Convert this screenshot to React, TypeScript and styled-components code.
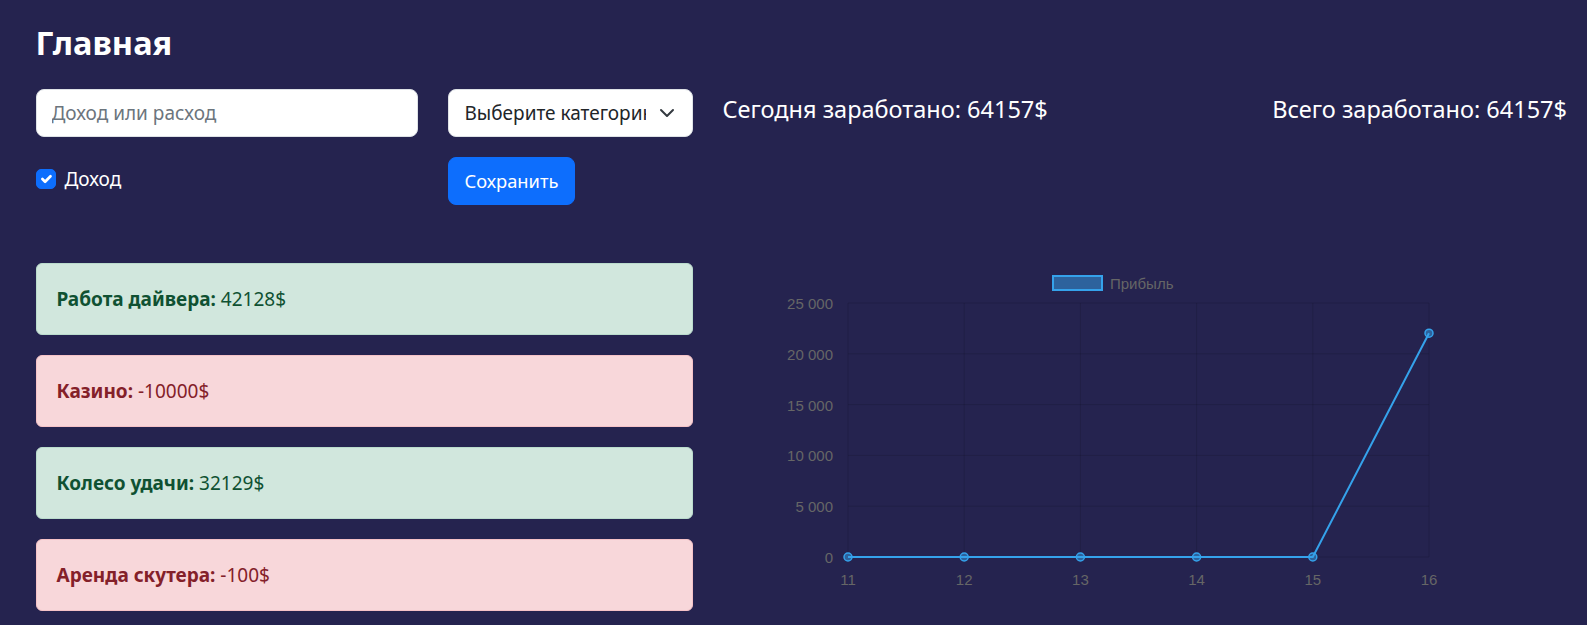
import React from 'react';
import styled, { createGlobalStyle } from 'styled-components';

const GlobalStyle = createGlobalStyle`
  html, body { margin: 0; padding: 0; background: #25234f; }
  body { font-family: "Noto Sans", "Open Sans", sans-serif; }
  *, *::before, *::after { box-sizing: border-box; }
`;

const Page = styled.div`
  min-height: 625px;
  padding: 23px 20px 0 35.5px;
  color: #fff;
`;

const Title = styled.h1`
  margin: 0;
  font-size: 32.5px;
  font-weight: 700;
  line-height: 40px;
`;

const TopRow = styled.div`
  display: flex;
  gap: 30px;
  margin-top: 26px;
`;

const FormGrid = styled.div`
  display: grid;
  grid-template-columns: 382px 245px;
  column-gap: 30px;
  row-gap: 20px;
  width: 657px;
  flex: none;
`;

const TextInput = styled.input`
  display: block;
  width: 100%;
  height: 48px;
  padding: 8px 15px;
  font-family: inherit;
  font-size: 19px;
  line-height: 1.5;
  color: #212529;
  background: #fff;
  border: 1px solid #dee2e6;
  border-radius: 8px;
  outline: none;
  &::placeholder { color: #6c757d; }
`;

const SelectWrap = styled.div`
  position: relative;
`;

const Select = styled.select`
  display: block;
  width: 100%;
  height: 48px;
  padding: 8px 46px 8px 16px;
  font-family: inherit;
  font-size: 19px;
  line-height: 1.5;
  color: #212529;
  background: #fff;
  border: 1px solid #dee2e6;
  border-radius: 8px;
  appearance: none;
  outline: none;
`;

const Chevron = styled.svg`
  position: absolute;
  right: 18px;
  top: 50%;
  width: 16px;
  height: 16px;
  margin-top: -8px;
  pointer-events: none;
`;

const CheckLabel = styled.label`
  display: flex;
  align-items: center;
  gap: 9px;
  margin-top: 7px;
  align-self: start;
  font-size: 19px;
  line-height: 30px;
  color: #fff;
`;

const CheckBox = styled.span`
  display: inline-flex;
  align-items: center;
  justify-content: center;
  width: 20px;
  height: 20px;
  border-radius: 5px;
  background: #0d6efd;
  border: 1px solid #0d6efd;
`;

const SaveButton = styled.button`
  justify-self: start;
  height: 48px;
  padding: 8px 16px;
  font-family: inherit;
  font-size: 18.3px;
  line-height: 1.5;
  color: #fff;
  background: #0d6efd;
  border: 1px solid #0d6efd;
  border-radius: 8px;
`;

const Stats = styled.div`
  flex: 1;
  display: flex;
  justify-content: space-between;
  align-items: flex-start;
  margin-top: 6px;
`;

const Stat = styled.div`
  font-size: 23.5px;
  line-height: 1.2;
  color: #fff;
`;

const MainRow = styled.div`
  display: flex;
  gap: 31px;
  margin-top: 58px;
  align-items: flex-start;
`;

const List = styled.div`
  width: 657px;
  flex: none;
  display: flex;
  flex-direction: column;
  gap: 20px;
`;

const Alert = styled.div<{ $kind: 'success' | 'danger' }>`
  padding: 20px;
  font-size: 19px;
  line-height: 30px;
  border-radius: 6px;
  border: 1px solid ${(p) => (p.$kind === 'success' ? '#badbcc' : '#f5c2c7')};
  background: ${(p) => (p.$kind === 'success' ? '#d1e7dd' : '#f8d7da')};
  color: ${(p) => (p.$kind === 'success' ? '#0f5132' : '#842029')};
  strong { font-weight: 700; }
`;

const ChartBox = styled.div`
  flex: 1;
`;

const ChartSvg = styled.svg`
  display: block;
  font-family: "Liberation Sans", Arial, sans-serif;
`;

const items: { name: string; value: number }[] = [
  { name: 'Работа дайвера', value: 42128 },
  { name: 'Казино', value: -10000 },
  { name: 'Колесо удачи', value: 32129 },
  { name: 'Аренда скутера', value: -100 },
];

const labels = ['11', '12', '13', '14', '15', '16'];
const data = [0, 0, 0, 0, 0, 22028];
const CL = 124;
const CR = 705;
const CT = 40;
const CB = 294;
const MAX = 25000;
const yOf = (v: number) => CB - (v / MAX) * (CB - CT);
const xOf = (i: number) => CL + (i * (CR - CL)) / (labels.length - 1);
const yTicks = [0, 5000, 10000, 15000, 20000, 25000];
const fmt = (v: number) => (v === 0 ? '0' : `${Math.floor(v / 1000)} 000`);

const Chart: React.FC = () => {
  const grid = 'rgba(0,0,0,0.12)';
  const blue = 'rgb(53,162,235)';
  const blueFill = 'rgba(53,162,235,0.5)';
  const points = data.map((v, i) => `${xOf(i)},${yOf(v)}`).join(' ');
  return (
    <ChartSvg width={845} height={350} viewBox="0 0 845 350">
      <rect x={329} y={13} width={49} height={14} fill={blueFill} stroke={blue} strokeWidth={2} />
      <text x={386} y={25.5} fontSize={15} fill="#666">Прибыль</text>
      {yTicks.map((t) => (
        <g key={t}>
          <line x1={CL} x2={CR} y1={yOf(t)} y2={yOf(t)} stroke={grid} strokeWidth={1} />
          <text x={109} y={yOf(t) + 6} fontSize={15} fill="#666" textAnchor="end">{fmt(t)}</text>
        </g>
      ))}
      {labels.map((l, i) => (
        <g key={l}>
          <line x1={xOf(i)} x2={xOf(i)} y1={CT} y2={CB} stroke={grid} strokeWidth={1} />
          <text x={xOf(i)} y={322} fontSize={15} fill="#666" textAnchor="middle">{l}</text>
        </g>
      ))}
      <polyline points={points} fill="none" stroke={blue} strokeWidth={2} />
      {data.map((v, i) => (
        <circle key={i} cx={xOf(i)} cy={yOf(v)} r={4} fill={blueFill} stroke={blue} strokeWidth={1.5} />
      ))}
    </ChartSvg>
  );
};

export default function App() {
  return (
    <>
      <GlobalStyle />
      <Page>
        <Title>Главная</Title>
        <TopRow>
          <FormGrid>
            <TextInput placeholder="Доход или расход" />
            <SelectWrap>
              <Select defaultValue="">
                <option value="">Выберите категорию</option>
              </Select>
              <Chevron viewBox="0 0 16 16">
                <path d="m2 5 6 6 6-6" fill="none" stroke="#343a40" strokeWidth={2} strokeLinecap="round" strokeLinejoin="round" />
              </Chevron>
            </SelectWrap>
            <CheckLabel>
              <CheckBox>
                <svg width="20" height="20" viewBox="0 0 20 20">
                  <path d="m6 10 3 3 6-6" fill="none" stroke="#fff" strokeWidth={3} strokeLinecap="round" strokeLinejoin="round" />
                </svg>
              </CheckBox>
              Доход
            </CheckLabel>
            <SaveButton>Сохранить</SaveButton>
          </FormGrid>
          <Stats>
            <Stat>Сегодня заработано: 64157$</Stat>
            <Stat>Всего заработано: 64157$</Stat>
          </Stats>
        </TopRow>
        <MainRow>
          <List>
            {items.map((it) => (
              <Alert key={it.name} $kind={it.value >= 0 ? 'success' : 'danger'}>
                <strong>{it.name}:</strong> {it.value}$
              </Alert>
            ))}
          </List>
          <ChartBox>
            <Chart />
          </ChartBox>
        </MainRow>
      </Page>
    </>
  );
}
